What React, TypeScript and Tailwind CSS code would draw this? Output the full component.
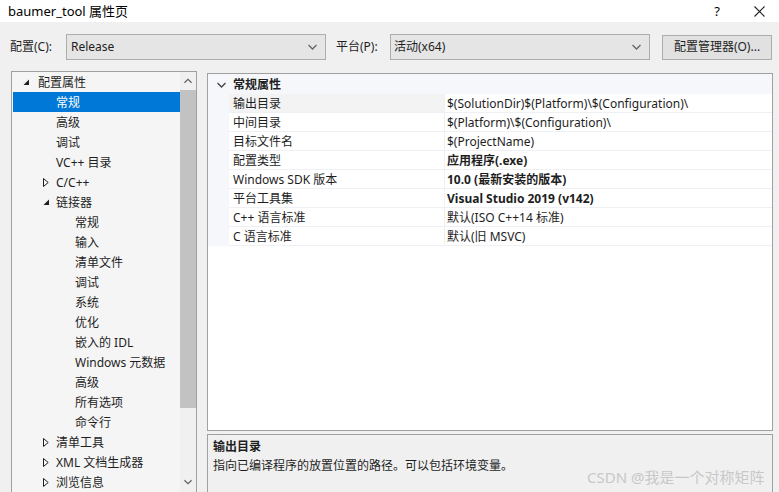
import React from "react";

const FONT = '"Noto Sans", "Noto Sans CJK SC", sans-serif';

function Expanded() {
  return (
    <svg width="7" height="7" viewBox="0 0 7 7" className="shrink-0">
      <polygon points="6,0.5 6,6 0.5,6" fill="#1e1e1e" />
    </svg>
  );
}
function Collapsed() {
  return (
    <svg width="6" height="9" viewBox="0 0 6 9" className="shrink-0">
      <polygon points="0.5,0.5 5.2,4.5 0.5,8.5" fill="none" stroke="#1e1e1e" strokeWidth="1" />
    </svg>
  );
}
function Chevron({ up = false, color = "#555", w = 9 }: { up?: boolean; color?: string; w?: number }) {
  return (
    <svg width={w} height="6" viewBox="0 0 9 6">
      <polyline
        points={up ? "0.5,5 4.5,1 8.5,5" : "0.5,1 4.5,5 8.5,1"}
        fill="none"
        stroke={color}
        strokeWidth="1.3"
      />
    </svg>
  );
}

type TreeItem = { label: string; level: number; icon?: "e" | "c"; selected?: boolean };
const tree: TreeItem[] = [
  { label: "配置属性", level: 0, icon: "e" },
  { label: "常规", level: 1, selected: true },
  { label: "高级", level: 1 },
  { label: "调试", level: 1 },
  { label: "VC++ 目录", level: 1 },
  { label: "C/C++", level: 1, icon: "c" },
  { label: "链接器", level: 1, icon: "e" },
  { label: "常规", level: 2 },
  { label: "输入", level: 2 },
  { label: "清单文件", level: 2 },
  { label: "调试", level: 2 },
  { label: "系统", level: 2 },
  { label: "优化", level: 2 },
  { label: "嵌入的 IDL", level: 2 },
  { label: "Windows 元数据", level: 2 },
  { label: "高级", level: 2 },
  { label: "所有选项", level: 2 },
  { label: "命令行", level: 2 },
  { label: "清单工具", level: 1, icon: "c" },
  { label: "XML 文档生成器", level: 1, icon: "c" },
  { label: "浏览信息", level: 1, icon: "c" },
];

const props: { name: string; value: string; bold?: boolean }[] = [
  { name: "输出目录", value: "$(SolutionDir)$(Platform)\\$(Configuration)\\" },
  { name: "中间目录", value: "$(Platform)\\$(Configuration)\\" },
  { name: "目标文件名", value: "$(ProjectName)" },
  { name: "配置类型", value: "应用程序(.exe)", bold: true },
  { name: "Windows SDK 版本", value: "10.0 (最新安装的版本)", bold: true },
  { name: "平台工具集", value: "Visual Studio 2019 (v142)", bold: true },
  { name: "C++ 语言标准", value: "默认(ISO C++14 标准)" },
  { name: "C 语言标准", value: "默认(旧 MSVC)" },
];

function TreeRow({ item }: { item: TreeItem }) {
  const indent = item.level === 0 ? "pl-[10px]" : item.level === 1 ? "pl-[30px]" : "pl-[62px]";
  return (
    <div
      className={`h-[20px] flex items-center pt-[1px] ${indent} ${
        item.selected ? "bg-[#0078d7] text-white" : "text-[#1e1e1e]"
      }`}
    >
      {item.level < 2 && (
        <span className={`${item.level === 0 ? "w-[15px]" : "w-[13px]"} flex items-center`}>
          {item.icon === "e" && <Expanded />}
          {item.icon === "c" && <Collapsed />}
        </span>
      )}
      <span className="whitespace-nowrap">{item.label}</span>
    </div>
  );
}

export default function App() {
  return (
    <div
      className="w-[779px] h-[492px] overflow-hidden bg-[#f0f0f0] text-[12px] text-[#1e1e1e] leading-none"
      style={{ fontFamily: FONT }}
    >
      {/* Title bar */}
      <div className="h-[22px] bg-white flex items-center justify-between pl-[8px] pr-[14px]">
        <span className="text-[13px] text-black">baumer_tool 属性页</span>
        <div className="flex items-center gap-[34px] text-[13px] text-black">
          <span>?</span>
          <svg width="11" height="11" viewBox="0 0 11 11">
            <path d="M0.5 0.5 L10.5 10.5 M10.5 0.5 L0.5 10.5" stroke="#222" strokeWidth="1.1" />
          </svg>
        </div>
      </div>

      {/* Config row */}
      <div className="flex items-center pl-[10px] mt-[12px] h-[26px]">
        <span className="w-[56px]">配置(C):</span>
        <div className="w-[260px] h-[26px] border border-[#adadad] bg-[#e5e5e5] flex items-center justify-between pl-[4px] pr-[8px]">
          <span>Release</span>
          <Chevron color="#666" />
        </div>
        <span className="ml-[10px] w-[54px]">平台(P):</span>
        <div className="w-[260px] h-[26px] border border-[#adadad] bg-[#e5e5e5] flex items-center justify-between pl-[3px] pr-[8px]">
          <span>活动(x64)</span>
          <Chevron color="#666" />
        </div>
        <div className="ml-[12px] w-[110px] h-[25px] border border-[#adadad] bg-[#e1e1e1] flex items-center justify-center">
          配置管理器(O)...
        </div>
      </div>

      {/* Main */}
      <div className="flex pl-[11px] mt-[11px]">
        {/* Tree */}
        <div className="w-[186px] h-[430px] border border-[#a0a0a0] bg-[#f5f5f5] flex">
          <div className="flex-1 flex flex-col pl-[1px]">
            {tree.map((t, i) => (
              <TreeRow key={i} item={t} />
            ))}
          </div>
          <div className="w-[16px] bg-[#f0f0f0] flex flex-col">
            <div className="h-[18px] flex items-center justify-center">
              <Chevron up color="#606060" w={8} />
            </div>
            <div className="h-[318px] bg-[#c2c2c2]" />
            <div className="h-[70px]" />
            <div className="h-[8px] flex items-center justify-center">
              <Chevron color="#606060" w={8} />
            </div>
          </div>
        </div>

        {/* Right side */}
        <div className="ml-[10px] mt-[2px] w-[566px] flex flex-col">
          <div className="h-[358px] border border-[#a0a0a0] bg-white">
            <div className="h-[20px] bg-[#f5f7fb] flex items-center pt-[1px]">
              <span className="w-[25px] flex justify-center pl-[2px]">
                <Chevron color="#444" />
              </span>
              <span className="font-bold">常规属性</span>
            </div>
            {props.map((p, i) => (
              <div key={i} className="h-[19px] flex">
                <div className="w-[21px] bg-[#f5f7fb]" />
                <div
                  className={`w-[215px] flex items-center pl-[4px] pt-[1px] border-b border-[#eef0f4] ${
                    i === 0 ? "bg-[#f3f3f3]" : "bg-white"
                  }`}
                >
                  {p.name}
                </div>
                <div className="w-[1px] bg-[#eef0f4]" />
                <div
                  className={`flex-1 flex items-center pl-[2px] pt-[1px] border-b border-[#eef0f4] ${
                    p.bold ? "font-bold" : ""
                  }`}
                >
                  {p.value}
                </div>
              </div>
            ))}
          </div>
          <div className="mt-[3px] h-[70px] border border-[#a0a0a0] bg-[#f0f0f0] relative pl-[5px] pt-[6px]">
            <div className="font-bold">输出目录</div>
            <div className="mt-[7px]">指向已编译程序的放置位置的路径。可以包括环境变量。</div>
            <div className="absolute left-[379px] top-[35px] text-[15px] text-[#c8c8c8] whitespace-nowrap">
              CSDN @我是一个对称矩阵
            </div>
          </div>
        </div>
      </div>
    </div>
  );
}
